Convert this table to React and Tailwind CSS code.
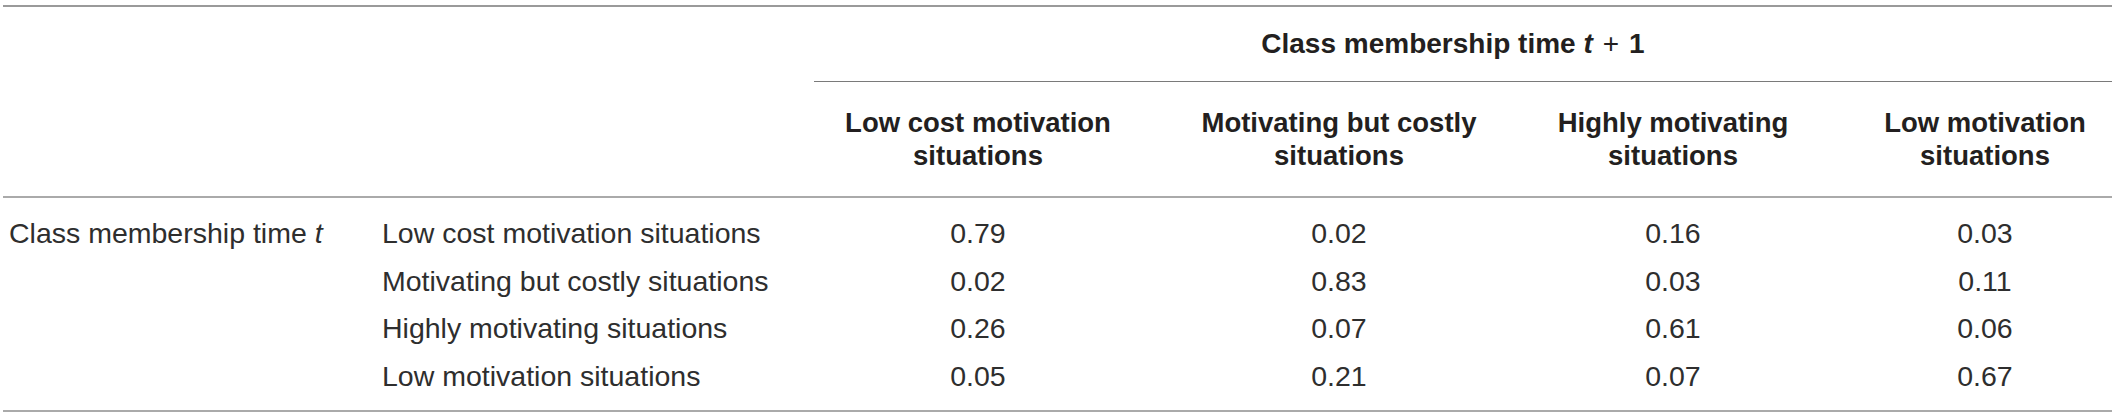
const columns = [
  ["Low cost motivation", "situations"],
  ["Motivating but costly", "situations"],
  ["Highly motivating", "situations"],
  ["Low motivation", "situations"],
];

const rows = [
  { group: "Class membership time", label: "Low cost motivation situations", values: ["0.79", "0.02", "0.16", "0.03"] },
  { label: "Motivating but costly situations", values: ["0.02", "0.83", "0.03", "0.11"] },
  { label: "Highly motivating situations", values: ["0.26", "0.07", "0.61", "0.06"] },
  { label: "Low motivation situations", values: ["0.05", "0.21", "0.07", "0.67"] },
];

// padding per value column so the numbers sit under their headers
const cellPad = ["", "", "", "pl-12"];

export default function App() {
  return (
    <div className="w-[2117px] h-[417px] bg-white pt-[5px] pl-[3px] text-[#231f20] font-['Liberation_Sans',Arial,sans-serif]">
      <div className="w-[2109px] border-t-2 border-[#9a9a9a]">
        {/* spanning header */}
        <div className="grid grid-cols-[811px_1fr] h-[75px]">
          <div />
          <div className="flex items-center justify-center border-b border-[#7a7a7a] font-bold text-[28px] pr-[20px]">
            <span>
              Class membership time <i>t</i>
              <span className="mx-[10px] font-normal">+</span>1
            </span>
          </div>
        </div>

        {/* column headers */}
        <div className="grid grid-cols-[373px_438px_328px_394px_274px_302px] h-[116px] border-b-2 border-[#aaaaaa] font-bold text-[27.5px] leading-[33px]">
          <div />
          <div />
          {columns.map((c, i) => (
            <div key={i} className={"flex flex-col items-center justify-center " + cellPad[i]}>
              <span>{c[0]}</span>
              <span>{c[1]}</span>
            </div>
          ))}
        </div>

        {/* body */}
        <div className="pt-[12px] pb-[10px] border-b-2 border-[#aaaaaa] text-[28.5px] text-[#2e2e2e]">
          {rows.map((r, ri) => (
            <div key={ri} className="grid grid-cols-[373px_438px_328px_394px_274px_302px] h-[47.5px] items-center">
              <div className="pl-[6px]">
                {r.group ? (
                  <span>
                    {r.group} <i>t</i>
                  </span>
                ) : null}
              </div>
              <div className="pl-[6px]">{r.label}</div>
              {r.values.map((v, vi) => (
                <div key={vi} className={"text-center " + cellPad[vi]}>
                  {v}
                </div>
              ))}
            </div>
          ))}
        </div>
      </div>
    </div>
  );
}
